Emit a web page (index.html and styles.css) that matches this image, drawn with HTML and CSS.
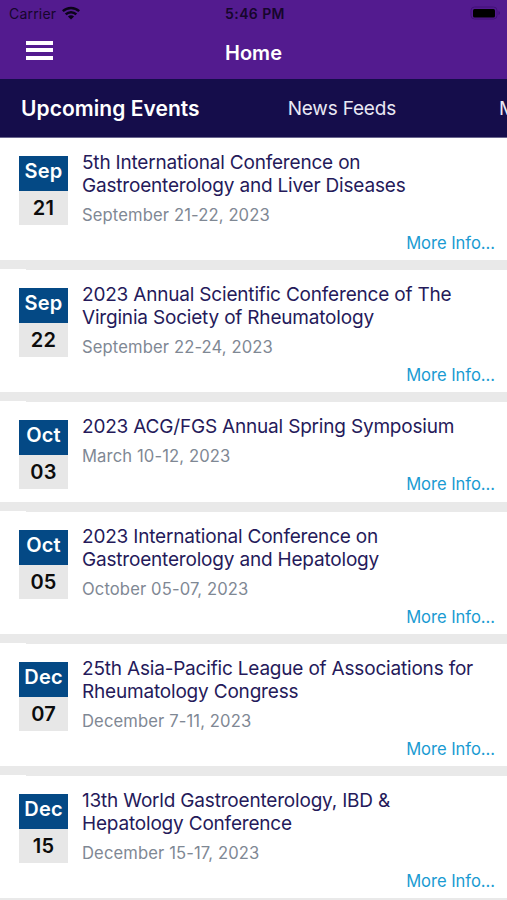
FILE: index.html
```html
<!DOCTYPE html>
<html lang="en">
<head>
	<meta charset="UTF-8">
	<title>Home</title>
	<link rel="stylesheet" href="styles.css">
</head>
<body>
	<header>
		<div class="status">
			<div class="carrier">
				<span>Carrier</span>
				<svg class="wifi" width="18" height="14" viewBox="0 0 18 14">
					<path d="M.8 5.2a11.8 11.8 0 0 1 16.4 0M3.7 8.3a7.6 7.6 0 0 1 10.6 0" fill="none" stroke="#0b0418" stroke-width="2.5"/>
					<path d="M9 13.6L5.9 10.6a4.5 4.5 0 0 1 6.2 0z" fill="#0b0418"/>
				</svg>
			</div>
			<span class="time">5:46 PM</span>
			<svg class="battery" width="31" height="14" viewBox="0 0 31 14">
				<rect x="1" y="1" width="26" height="12" rx="3.5" fill="none" stroke="#421079"/>
				<rect x="3" y="3" width="22" height="8.5" rx="1.5" fill="#000"/>
				<path d="M28.5 5v4q1.5-.6 1.5-2t-1.5-2z" fill="#421079"/>
			</svg>
		</div>
		<div class="bar">
			<div class="menu"><i></i><i></i><i></i></div>
			<h1>Home</h1>
		</div>
	</header>
	<nav>
		<a class="active">Upcoming Events</a>
		<a>News Feeds</a>
		<a>M</a>
	</nav>
	<ul class="events">
		<li class="event">
			<div class="date"><b>Sep</b><b class="day">21</b></div>
			<div class="info">
				<h2>5th International Conference on<br>Gastroenterology and Liver Diseases</h2>
				<p>September 21-22, 2023</p>
				<a class="more">More Info...</a>
			</div>
		</li>
		<li class="event">
			<div class="date"><b>Sep</b><b class="day">22</b></div>
			<div class="info">
				<h2>2023 Annual Scientific Conference of The<br>Virginia Society of Rheumatology</h2>
				<p>September 22-24, 2023</p>
				<a class="more">More Info...</a>
			</div>
		</li>
		<li class="event short">
			<div class="date"><b>Oct</b><b class="day">03</b></div>
			<div class="info">
				<h2>2023 ACG/FGS Annual Spring Symposium</h2>
				<p>March 10-12, 2023</p>
				<a class="more">More Info...</a>
			</div>
		</li>
		<li class="event">
			<div class="date"><b>Oct</b><b class="day">05</b></div>
			<div class="info">
				<h2>2023 International Conference on<br>Gastroenterology and Hepatology</h2>
				<p>October 05-07, 2023</p>
				<a class="more">More Info...</a>
			</div>
		</li>
		<li class="event">
			<div class="date"><b>Dec</b><b class="day">07</b></div>
			<div class="info">
				<h2>25th Asia-Pacific League of Associations for<br>Rheumatology Congress</h2>
				<p>December 7-11, 2023</p>
				<a class="more">More Info...</a>
			</div>
		</li>
		<li class="event">
			<div class="date"><b>Dec</b><b class="day">15</b></div>
			<div class="info">
				<h2>13th World Gastroenterology, IBD &amp;<br>Hepatology Conference</h2>
				<p>December 15-17, 2023</p>
				<a class="more">More Info...</a>
			</div>
		</li>
	</ul>
</body>
</html>
```
FILE: styles.css
```css
*{
	box-sizing: border-box;
	margin: 0;
	padding: 0;
}
body{
	height: 900px;
	overflow: hidden;
	background: #fff;
	font-family: Inter, "Liberation Sans", sans-serif;
}
header{
	height: 79px;
	background: #531b8f;
}
.status{
	display: grid;
	grid-template-columns: 1fr auto 1fr;
	align-items: center;
	height: 27px;
	padding: 0 6px 0 9px;
	font-size: 14px;
	color: #16062c;
}
.carrier{
	display: flex;
	align-items: center;
	gap: 6px;
	letter-spacing: 0.2px;
}
.wifi{
	margin-top: -2px;
}
.time{
	font-weight: 600;
	letter-spacing: 0.4px;
}
.battery{
	justify-self: end;
	margin-top: -1px;
}
.bar{
	display: grid;
	grid-template-columns: 1fr auto 1fr;
	height: 52px;
	padding: 0 26px;
}
.menu{
	display: flex;
	flex-direction: column;
	gap: 3.4px;
	width: 27px;
	padding-top: 14px;
}
.menu i{
	height: 4px;
	background: #fff;
}
h1{
	font-size: 20px;
	font-weight: 600;
	line-height: 52px;
	color: #fff;
}
nav{
	display: flex;
	height: 59px;
	padding-left: 21px;
	overflow: hidden;
	background: #150d4b;
	border-bottom: 1px solid #6a668f;
	font-size: 19px;
	line-height: 59px;
	letter-spacing: -0.2px;
	color: #e9e8f4;
	white-space: nowrap;
}
nav a{
	flex: none;
	margin-right: 103px;
}
nav .active{
	margin-right: 88px;
	font-size: 21px;
	font-weight: 600;
	letter-spacing: 0.05px;
	color: #fff;
}
.events{
	list-style: none;
}
.event{
	position: relative;
	display: flex;
	gap: 14px;
	height: 132px;
	padding: 18px 12px 0 19px;
	border-bottom: 10px solid #e9e9e9;
}
/* divider is thinner under the left edge */
.event + .event::before{
	content: "";
	position: absolute;
	top: -1px;
	left: 0;
	width: 26px;
	height: 1px;
	background: #fff;
}
.short{
	height: 110px;
}
.date{
	flex: none;
	width: 49px;
	height: 69px;
	background: #e7e7e7;
	text-align: center;
	font-size: 20px;
}
.date b{
	display: block;
	height: 35px;
	background: #044985;
	color: #fff;
	font-weight: 600;
	line-height: 30px;
	letter-spacing: 0.2px;
}
.date .day{
	height: 34px;
	background: none;
	color: #0c0c0c;
	line-height: 35px;
}
.info{
	display: flex;
	flex-direction: column;
	flex: 1;
	margin-top: -5px;
	white-space: nowrap;
}
h2{
	font-size: 19px;
	font-weight: 400;
	line-height: 23.2px;
	letter-spacing: -0.19px;
	color: #251a5a;
}
.info p{
	margin-top: 6.7px;
	font-size: 16.6px;
	line-height: 22px;
	letter-spacing: 0.12px;
	color: #7f8894;
}
.more{
	align-self: flex-end;
	margin-top: 6px;
	font-size: 16.6px;
	line-height: 22px;
	letter-spacing: -0.05px;
	color: #1a9bd2;
}
```
